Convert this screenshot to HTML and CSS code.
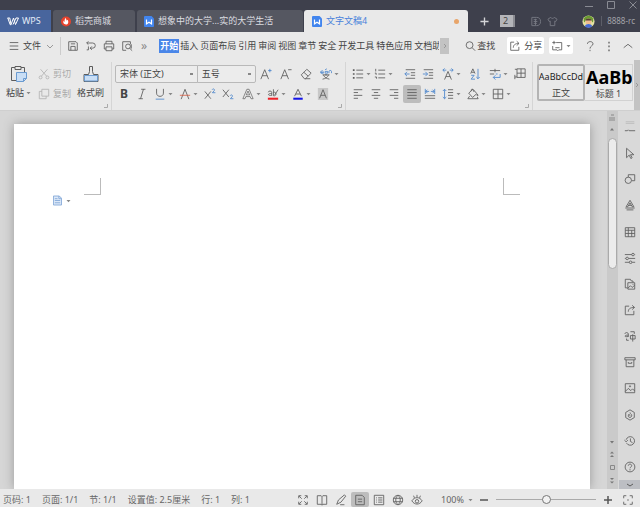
FILE: index.html
```html
<!DOCTYPE html>
<html lang="zh-CN">
<head>
<meta charset="utf-8">
<title>文字文稿4</title>
<link rel="stylesheet" href="styles.css">
</head>
<body>
<svg class="defs" aria-hidden="true">
  <symbol id="caret" viewBox="0 0 5 4"><path d="M.5 1h4L2.500 3.200z" fill="#888" stroke="none"/></symbol>
  <symbol id="doc" viewBox="0 0 10 11"><path d="M1 0h6.500L10 2.500V10a1 1 0 0 1-1 1H1a1 1 0 0 1-1-1V1a1 1 0 0 1 1-1z" fill="#4285ee" stroke="none"/><path d="M2.500 3.500v4.300L5 6.200l2.500 1.600V3.500" fill="none" stroke="#fff" stroke-width="1.200"/></symbol>
  <symbol id="corner" viewBox="0 0 4 4"><path d="M3.500 0v3.500H0" fill="none" stroke="#aaa"/></symbol>
</svg>
<div class="app">
  <header class="titlebar">
    <div class="window-controls">
      <button aria-label="最小化"><svg viewBox="0 0 8 8"><path d="M0 5.500h8"/></svg></button>
      <button aria-label="最大化"><svg viewBox="0 0 8 8"><path d="M.5.5h7v7h-7z"/></svg></button>
      <button aria-label="关闭"><svg viewBox="0 0 8 8"><path d="M.5.5l7 7M7.500.5l-7 7"/></svg></button>
    </div>
    <nav class="tabs">
      <button class="tab home"><svg class="wps" viewBox="0 0 12 9"><path d="M.5 1h2.300L4 7.500 6.500 1l2 6.500L11.500 1H9L6 7.500M.8 1l2.400 6.700h1"/></svg>WPS</button>
      <button class="tab shop"><svg class="tab-icon" viewBox="0 0 11 11"><circle cx="5.500" cy="5.500" r="5.500" fill="#e6432d" stroke="none"/><path d="M5.500 1.500c-.5 1.500.8 2 .7 3.300l1-1.300c1.700 2.500.6 5.300-1.700 5.300S1.700 6.600 3 4.500c.2 1 .6 1.400 1 1.500C3.700 4 4.200 2.500 5.500 1.500z" fill="#fff" stroke="none"/></svg>稻壳商城</button>
      <button class="tab file"><svg class="tab-icon"><use href="#doc"/></svg>想象中的大学...实的大学生活</button>
      <button class="tab active"><svg class="tab-icon"><use href="#doc"/></svg>文字文稿4<i class="unsaved"></i></button>
      <button class="plus" aria-label="新建"><svg viewBox="0 0 10 10"><path d="M5 .5v9M.5 5h9"/></svg></button>
      <span class="count">2</span>
      <button class="skin" aria-label="稻壳"><svg viewBox="0 0 12 12"><path d="M2 1.500h5a4 4 0 0 1 0 9H2zM4 4h3.500M4 6h4M4 8h3.500M6 3v7"/></svg></button>
      <button class="skin" aria-label="皮肤"><svg viewBox="0 0 12 12"><path d="M4 1.500L1 3.500 2.500 6l1-.5v5h5v-5l1 .5L11 3.500l-3-2c-.7 1.500-3.300 1.500-4 0z"/></svg></button>
      <button class="account"><svg viewBox="0 0 14 14"><circle cx="7" cy="7" r="6.500" fill="#e5e2a2"/><path d="M2 7C1 3 4 .8 7 .8S13 3 12 7l-1 1-1-3H4L3 8z" fill="#6a9b32"/><circle cx="7" cy="7" r="3.200" fill="#efbd91"/><path d="M3.500 6C4 3 10 3 10.500 6z" fill="#554136"/><path d="M3 12c1-3 7-3 8 0a6 6 0 0 1-8 0z" fill="#466bd5"/></svg><span>8888-rc</span></button>
    </nav>
  </header>

  <div class="menubar">
    <button class="file-menu"><svg class="ic" viewBox="0 0 14 14"><path d="M2 3h10M2 7h10M2 11h10"/></svg>文件<svg class="chev" viewBox="0 0 8 8"><path d="M1 3l3 3 3-3"/></svg></button>
    <div class="quick">
      <button aria-label="保存"><svg class="ic" viewBox="0 0 14 14"><path d="M2 3.500V2h8.500L12 3.500V12H2zM4.500 12V7.500h5V12M4.500 4.500h5"/></svg></button>
      <button aria-label="撤销"><svg class="ic" viewBox="0 0 14 14"><path d="M2 3.500h7a3 3 0 0 1 0 6H6M4 1.500l-2 2 2 2M4 7.500v4H2M8 7.500l-2 2 2 2"/></svg></button>
      <button aria-label="打印"><svg class="ic" viewBox="0 0 14 14"><path d="M3.500 4.500v-3h7v3M3.500 10.500h-2v-6h11v6h-2M3.500 8h7v4.500h-7z"/></svg></button>
      <button aria-label="打印预览"><svg class="ic" viewBox="0 0 14 14"><path d="M6 12H2V2h9v3M11 7.500a2.800 2.800 0 1 0-5.600 0 2.800 2.800 0 0 0 5.600 0zM10 9.500l3 3M12 5v5"/></svg></button>
      <button class="more" aria-label="更多">»</button>
    </div>
    <nav class="menus">
      <button class="on">开始</button><button>插入</button><button>页面布局</button><button>引用</button><button>审阅</button><button>视图</button><button>章节</button><button>安全</button><button>开发工具</button><button>特色应用</button><button class="cut">文档助</button>
    </nav>
    <button class="scroll-menu" aria-label="向右"><svg class="chev-right" viewBox="0 0 4 6"><path d="M1 1l2 2-2 2"/></svg></button>
    <button class="search"><svg class="ic" viewBox="0 0 14 14"><circle cx="6.500" cy="6" r="4"/><path d="M9.500 9l3.500 3.500"/></svg>查找</button>
    <button class="pill"><svg class="ic" viewBox="0 0 14 14"><path d="M6 2.500H2V12h9.500V8M5 9c0-3 2-5 6.500-5M9 1.500L11.700 4 9 6.500"/></svg>分享</button>
    <button class="pill narrow" aria-label="批注"><svg class="ic" viewBox="0 0 14 14"><path d="M6 3h6.500v8.500H9l-1 1-1-1H2V7M1.500 3h4M3.500 1v4M5 9h5"/></svg><svg class="caret"><use href="#caret"/></svg></button>
    <div class="help">
      <button aria-label="帮助"><svg class="ic" viewBox="0 0 14 14"><path d="M4 4.500C4 1 10.500 1 10.500 4.500 10.500 7 7 6.800 7 10M7 11.500V13"/></svg></button>
      <button aria-label="选项"><svg class="ic" viewBox="0 0 14 14"><path d="M7 2v2M7 6.500v2M7 11v2" stroke-width="1.500"/></svg></button>
      <button aria-label="收起"><svg class="ic" viewBox="0 0 14 14"><path d="M2 9l5-4 5 4"/></svg></button>
    </div>
  </div>

  <div class="ribbon">
    <section class="group clipboard">
      <button class="big"><svg viewBox="0 0 18 18"><path d="M5 2.500H1.500v13H6M11 2.500h3.500V7M5 1.500h6v3H5z"/><path d="M6.500 7.500h10v6l-3 3h-7z" fill="#c9def5" stroke="#6b9bd0"/><path d="M16.500 13.500h-3v3" stroke="#6b9bd0"/></svg><span>粘贴<svg class="caret"><use href="#caret"/></svg></span></button>
      <div class="stack">
        <button><svg class="ic" viewBox="0 0 14 14"><path d="M3 1.500l7 8M11 1.500l-7 8"/><circle cx="3" cy="11" r="1.700"/><circle cx="11" cy="11" r="1.700"/></svg>剪切</button>
        <button><svg class="ic" viewBox="0 0 14 14"><path d="M4.500 1.500h8v8h-8zM4.500 4h-3v8.500h8v-3"/></svg>复制</button>
      </div>
      <button class="big painter"><svg viewBox="0 0 18 18"><path d="M2 16.500v-7h4.500l1-3v-5h3v5l1 3H16v7z"/><path d="M2.500 10.500h13v5.500h-13z" fill="#c9def5" stroke="#6b9bd0"/></svg><span>格式刷</span></button>
      <svg class="launcher"><use href="#corner"/></svg>
    </section>

    <section class="group font">
      <div class="row">
        <select class="family" aria-label="字体"><option>宋体 (正文)</option></select>
        <select class="size" aria-label="字号"><option>五号</option></select>
        <button class="t w20" aria-label="增大字号"><svg class="ic" viewBox="0 0 14 14"><path d="M1 13L5.500 2 10 13M2.500 9h6"/><path d="M9.500 3h4M11.500 1v4" stroke="#4d86cc"/></svg></button>
        <button class="t w20" aria-label="减小字号"><svg class="ic" viewBox="0 0 14 14"><path d="M1 13L5.500 2 10 13M2.500 9h6M9.500 2h4"/></svg></button>
        <button class="t w20" aria-label="清除格式"><svg class="ic" viewBox="0 0 14 14"><path d="M1.500 8l6.500-6.500 5 4.500-6.500 6.500H5zM4.500 5l5 4.500M6 12.500h6"/></svg></button>
        <button class="t w25" aria-label="拼音"><svg class="ic" viewBox="0 0 14 14"><path d="M1 5.500c0-3 3-3 3 0H1V4M6 4h3v2H6zM10.500 6V4c0-1.500 3-1.500 3 0v2M1 6h3M6 2l2-1" stroke="#4d86cc"/><path d="M3 8h8M7 7v2M4 8c1 3 4 4.500 7 5M10 8c-1 3-4 4.500-7 5"/></svg><svg class="caret"><use href="#caret"/></svg></button>
      </div>
      <div class="row">
        <button class="t w18 bold">B</button>
        <button class="t w18" aria-label="倾斜"><svg class="ic" viewBox="0 0 14 14"><path d="M6 1.500h5M3 12.500h5M8.700 1.500l-3.400 11"/></svg></button>
        <button class="t w25" aria-label="下划线"><svg class="ic" viewBox="0 0 14 14"><path d="M3 1v5c0 5 8 5 8 0V1"/><path d="M2 13h10" stroke="#4d86cc"/></svg><svg class="caret"><use href="#caret"/></svg></button>
        <button class="t w25" aria-label="删除线"><svg class="ic" viewBox="0 0 14 14"><path d="M2.500 13L7 1.500 11.500 13"/><path d="M1 8.500h12" stroke="#d7634a"/></svg><svg class="caret"><use href="#caret"/></svg></button>
        <button class="t w18" aria-label="上标"><svg class="ic" viewBox="0 0 14 14"><path d="M1 4l7 8.500M8 4l-7 8.500"/><path d="M9.500 2c1-2 3.500-.5 2.500 1L9.800 5.500h3.500" stroke="#4d86cc"/></svg></button>
        <button class="t w20" aria-label="下标"><svg class="ic" viewBox="0 0 14 14"><path d="M1 2l7 8.500M8 2l-7 8.500"/><path d="M9.500 9c1-2 3.500-.5 2.500 1l-2.200 2.500h3.500" stroke="#4d86cc"/></svg></button>
        <button class="t w25" aria-label="文字效果"><svg class="ic" viewBox="0 0 14 14"><path d="M1 12.500L5.700 1.500h2.600L13 12.500h-2.500l-1-2.500h-5l-1 2.500zM5 8h4L7 3.500z" stroke-width=".8"/></svg><svg class="caret"><use href="#caret"/></svg></button>
        <button class="t w25" aria-label="突出显示"><svg class="ic" viewBox="0 0 14 14"><path d="M1.500 5c0-2 4-2 4 0v4M5.500 6.500c-5-.5-5 3 0 2M7.500 1.500V9c4 1 4-5 0-4M13 2l-4 6"/><path d="M1 12.500h12" stroke="#ee2028" stroke-width="2.400"/></svg><svg class="caret"><use href="#caret"/></svg></button>
        <button class="t w25" aria-label="字体颜色"><svg class="ic" viewBox="0 0 14 14"><path d="M3 9.500l4-8 4 8M4.500 7h5"/><path d="M1.500 12.500h11" stroke="#1414e8" stroke-width="2.400"/></svg><svg class="caret"><use href="#caret"/></svg></button>
        <button class="t w18" aria-label="字符底纹"><svg class="ic" viewBox="0 0 14 14"><path d="M1 0h12v14H1z" fill="#c8c8c8" stroke="none"/><path d="M3 12L7 2l4 10M4.500 8.500h5"/></svg></button>
      </div>
      <svg class="launcher"><use href="#corner"/></svg>
    </section>

    <section class="group para">
      <div class="row">
        <button class="t w22" aria-label="项目符号"><svg class="ic" viewBox="0 0 14 14"><path d="M5 2.500h8M5 7h8M5 11.500h8"/><path d="M1 2.500h2M1 7h2M1 11.500h2" stroke-width="2"/></svg><svg class="caret"><use href="#caret"/></svg></button>
        <button class="t w30" aria-label="编号"><svg class="ic" viewBox="0 0 14 14"><path d="M5 2.500h8M5 7h8M5 11.500h8M2 1v3M1 6h1.500v2M1 10.500h2v2"/></svg><svg class="caret"><use href="#caret"/></svg></button>
        <button class="t w18" aria-label="减少缩进"><svg class="ic" viewBox="0 0 14 14"><path d="M2 2h11M8 5.500h5M8 8.500h5M2 12h11"/><path d="M1 7h5.500M3.500 4.500L1 7l2.500 2.500" stroke="#4d86cc"/></svg></button>
        <button class="t w20" aria-label="增加缩进"><svg class="ic" viewBox="0 0 14 14"><path d="M2 2h11M8 5.500h5M8 8.500h5M2 12h11"/><path d="M1 7h5.500M4 4.500L6.500 7 4 9.500" stroke="#4d86cc"/></svg></button>
        <button class="t w27" aria-label="字符缩放"><svg class="ic" viewBox="0 0 14 14"><path d="M3 13.500L7 4l4 9.500M4.500 10h5"/><path d="M5 2.500H1M3 .5l-2 2 2 2M9 2.500h4M11 .5l2 2-2 2" stroke="#4d86cc"/></svg><svg class="caret"><use href="#caret"/></svg></button>
        <button class="t w20" aria-label="排序"><svg class="ic" viewBox="0 0 14 14"><path d="M2 6.500l2.500-5.500L7 6.500M3 5h3"/><path d="M2.500 8.500H6L2.500 13H7M10.500 1v11.500M8.500 10.500l2 2 2-2" stroke="#4d86cc"/></svg></button>
        <button class="t w25" aria-label="换行"><svg class="ic" viewBox="0 0 14 14"><path d="M1 3h12M7 1v4M1 7h5"/><path d="M13 7v4H5M7.500 8.500L5 11l2.500 2.500M8 7h2" stroke="#4d86cc"/></svg><svg class="caret"><use href="#caret"/></svg></button>
        <button class="t w18" aria-label="制表位"><svg class="ic" viewBox="0 0 14 14"><path d="M3.500 1h9.500v10H3.500zM8.200 1v10M3.500 6H13M1 8v5M1 10.500h2.500M1 1.500h2.500"/></svg></button>
      </div>
      <div class="row">
        <button class="t w18" aria-label="左对齐"><svg class="ic" viewBox="0 0 14 14"><path d="M2 2h10M2 5.300h5M2 8.600h10M2 12h5"/></svg></button>
        <button class="t w18" aria-label="居中"><svg class="ic" viewBox="0 0 14 14"><path d="M2 2h10M4.500 5.300h5M2 8.600h10M4.500 12h5"/></svg></button>
        <button class="t w18" aria-label="右对齐"><svg class="ic" viewBox="0 0 14 14"><path d="M2 2h10M7 5.300h5M2 8.600h10M7 12h5"/></svg></button>
        <button class="t w18 pressed" aria-label="两端对齐"><svg class="ic" viewBox="0 0 14 14"><path d="M1.500 2h11M1.500 5.300h11M1.500 8.600h11M1.500 12h11"/></svg></button>
        <button class="t w18" aria-label="分散对齐"><svg class="ic" viewBox="0 0 14 14"><path d="M1 9h12M1 12h12"/><path d="M1.500 1v6M12.500 1v6M2 4h4M8 4h4M4 2L2 4l2 2M10 2l2 2-2 2" stroke="#4d86cc"/></svg></button>
        <button class="t w25" aria-label="行距"><svg class="ic" viewBox="0 0 14 14"><path d="M7 2h6M7 5.300h6M7 8.600h6M7 12h6"/><path d="M3 1.500v11M1 3.500l2-2 2 2M1 10.500l2 2 2-2" stroke="#4d86cc"/></svg><svg class="caret"><use href="#caret"/></svg></button>
        <button class="t w25" aria-label="底纹颜色"><svg class="ic" viewBox="0 0 14 14"><path d="M2 6l5-4.500 4.500 5L6.500 11zM5 3.500c-1-3 3-3 3 1M12 7c2 3-1 3 0 0M3 9.500l-2 3h12l-1-2"/></svg><svg class="caret"><use href="#caret"/></svg></button>
        <button class="t w25" aria-label="边框"><svg class="ic" viewBox="0 0 14 14"><path d="M1.500 1.500h11v11h-11zM7 1.500v11M1.500 7h11"/></svg><svg class="caret"><use href="#caret"/></svg></button>
      </div>
      <svg class="launcher"><use href="#corner"/></svg>
    </section>

    <section class="group styles">
      <button class="style chosen"><span class="sample">AaBbCcDd</span><span>正文</span></button>
      <button class="style"><span class="sample heading">AaBb</span><span>标题 1</span></button>
    </section>
    <button class="ribbon-next" aria-label="更多功能"><svg class="chev-right" viewBox="0 0 4 6"><path d="M1 1l2 2-2 2"/></svg></button>
  </div>

  <main class="workspace">
    <div class="canvas">
      <article class="paper">
        <div class="margins"><i class="mark left"></i><i class="mark right"></i></div>
        <button class="paste-tag" aria-label="文档选项"><svg viewBox="0 0 10 11"><path d="M.5.5H7L9.500 3v7.500h-9z" fill="#dce8f8" stroke="#84a9d8"/><path d="M2 3.500h3M2 5.500h6M2 8h6M6.500.5v3h3" stroke="#84a9d8" fill="none"/></svg><svg class="caret"><use href="#caret"/></svg></button>
      </article>
    </div>
    <div class="scrollbar">
      <svg class="up" viewBox="0 0 8 20"><path d="M3 4h3M1 7h6M1 9h6"/><path d="M2 19.500h4L4 17z" fill="#777" stroke="none"/></svg>
      <div class="thumb"></div>
      <svg class="down" viewBox="0 0 8 50"><path d="M2 2h4L4 4.500zM2 14.500l2-2 2 2zM2 18l2-2 2 2z" fill="#777" stroke="none"/><path d="M2.500 26.500h4v4h-4z"/><path d="M2 39h4l-2 2zM2 42.500h4l-2 2z" fill="#777" stroke="none"/></svg>
    </div>
    <aside class="sidebar">
      <svg class="grip" viewBox="0 0 14 14"><path d="M2 2h10M2 4h10" stroke="#bbb"/><path d="M1 12.500h3l1-1 1 1h7"/></svg>
      <button aria-label="选择"><svg class="ic" viewBox="0 0 14 14"><path d="M3 1.500v11l3-3 2 4 1.500-1-2-3.500h4z"/></svg></button>
      <button aria-label="形状"><svg class="ic" viewBox="0 0 14 14"><path d="M5 5V2h7.500v7H9"/><circle cx="5" cy="8.500" r="3.700"/></svg></button>
      <button aria-label="艺术字"><svg class="ic" viewBox="0 0 14 14"><path d="M2.500 9L7 1.500 11.500 9H9.500L7 4.500 4.500 9zM5.500 7.500h3M1.500 10.500h11M3 12.700h8"/></svg></button>
      <button aria-label="表格"><svg class="ic" viewBox="0 0 14 14"><path d="M1.500 2h11v10.500h-11zM1.500 5h11M1.500 8.700h11M5 2v10.500M9 5v7.500"/></svg></button>
      <button aria-label="属性"><svg class="ic" viewBox="0 0 14 14"><path d="M1 3h8M12.500 3h.5M1 7.500h1M5.500 7.500H13M1 12h5M9.500 12H13"/><circle cx="10.500" cy="3" r="1.500"/><circle cx="3.700" cy="7.500" r="1.500"/><circle cx="7.700" cy="12" r="1.500"/></svg></button>
      <button aria-label="图库"><svg class="ic" viewBox="0 0 14 14"><path d="M4 11.500H1.500v-10h6l1 2h2V5M4.500 5.500h8v7.500h-8zM4.500 12l3-3 2 2 3-2.500M10 7.500h1"/></svg></button>
      <button aria-label="分享"><svg class="ic" viewBox="0 0 14 14"><path d="M6 2.500H1.500V12.500h10V8M5 9c0-3 2-5 7-5M9.500 1.500L12.300 4 9.500 6.500"/></svg></button>
      <button aria-label="翻译"><svg class="ic" viewBox="0 0 14 14"><path d="M1 4.500c0-2 4-2 4 0V8M5 6C0 5.500 0 9 5 7.500M7.500 6.500H13v4H7.500zM10.200 5v8.500M7.500 2H12v2.500M3 10v2h2.500"/></svg></button>
      <button aria-label="归档"><svg class="ic" viewBox="0 0 14 14"><path d="M1 2h12v2.500H1zM2.500 4.500v8h9v-8M5 7v1.500h4V7"/></svg></button>
      <button aria-label="图片"><svg class="ic" viewBox="0 0 14 14"><path d="M1.500 2h11v10.500h-11zM1.500 11l3.500-3.500L8 10l2-2 2.500 2.500"/><circle cx="7" cy="5" r=".7"/></svg></button>
      <button aria-label="稻壳"><svg class="ic" viewBox="0 0 14 14"><path d="M7 1l5 3v6l-5 3-5-3V4zM7 4c0 2 2.500 2 2 4-.5 2.500-4 2.500-4 0 0-1 .5-1.500 1-2 0 1.500 1 1 1 2.500"/></svg></button>
      <button aria-label="历史"><svg class="ic" viewBox="0 0 14 14"><path d="M3 9.500a5 5 0 1 0-.5-4M.5 6l2 2 2-2M7.500 4v3.500l2.500 1.500"/></svg></button>
      <button aria-label="帮助"><svg class="ic" viewBox="0 0 14 14"><circle cx="7" cy="7" r="5.700"/><path d="M5 5.500c0-2.500 4-2.500 4 0C9 7 7 7 7 8.500M7 9.500V11"/></svg></button>
      <button class="side-more" aria-label="更多"><svg viewBox="0 0 8 8"><path d="M1 3l3 2 3-2"/></svg></button>
    </aside>
  </main>

  <footer class="status">
    <div class="facts"><span>页码: 1</span><span>页面: 1/1</span><span>节: 1/1</span><span>设置值: 2.5厘米</span><span>行: 1</span><span>列: 1</span></div>
    <div class="views">
      <button aria-label="全屏"><svg class="ic" viewBox="0 0 14 14"><path d="M2 5V2h3M9 2h3v3M12 9v3H9M5 12H2V9M2.500 2.500l3 3M11.500 2.500l-3 3M2.500 11.500l3-3M11.500 11.500l-3-3"/></svg></button>
      <button aria-label="阅读"><svg class="ic" viewBox="0 0 14 14"><path d="M1.500 2H6l1 1 1-1h4.500v10H8l-1 1-1-1H1.500zM7 3v10"/></svg></button>
      <button aria-label="写作"><svg class="ic" viewBox="0 0 14 14"><path d="M2 12l2-5 7-6 1.500 1.500L7 9.500zM6 12.500h5"/></svg></button>
      <button class="pressed" aria-label="页面视图"><svg class="ic" viewBox="0 0 14 14"><path d="M2 1.500h7.500L12 4v8.500H2zM4.500 6h5M4.500 9h5"/></svg></button>
      <button aria-label="大纲"><svg class="ic" viewBox="0 0 14 14"><path d="M1.500 1.500h11v11h-11zM3.500 4.500h1M6 4.500h5M3.500 7h1M6 7h5M3.500 9.500h1M6 9.500h5"/></svg></button>
      <button aria-label="网页"><svg class="ic" viewBox="0 0 14 14"><circle cx="7" cy="7" r="5.500"/><path d="M1.500 5h11M1.500 9h11M7 1.500c-3.500 3-3.500 8 0 11M7 1.500c3.500 3 3.500 8 0 11"/></svg></button>
      <button aria-label="护眼"><svg class="ic" viewBox="0 0 14 14"><path d="M1 8c3-5 9-5 12 0-3 5-9 5-12 0zM7 1v2.500M3 2l1 2.500M11 2l-1 2.500"/><circle cx="7" cy="8.500" r="2"/></svg></button>
    </div>
    <button class="zoom-value">100%<svg class="caret"><use href="#caret"/></svg></button>
    <button class="step" aria-label="缩小"><svg viewBox="0 0 8 8"><path d="M0 4h8"/></svg></button>
    <input class="zoom" type="range" min="0" max="200" value="100" aria-label="缩放">
    <button class="step" aria-label="放大"><svg viewBox="0 0 8 8"><path d="M0 4h8M4 0v8"/></svg></button>
    <button class="fit" aria-label="适应窗口"><svg class="ic" viewBox="0 0 14 14"><path d="M2 5V2h3M9 2h3v3M12 9v3H9M5 12H2V9M6 7h2"/></svg></button>
  </footer>
</div>
</body>
</html>
```
FILE: styles.css
```css
* { box-sizing: border-box; }
body {
  margin: 0;
  font: 9px/12px "Noto Sans", "Noto Sans CJK SC", sans-serif;
  color: #444;
  background: #e9e9e9;
}
button, select, input { font: inherit; color: inherit; margin: 0; }
button {
  display: flex;
  align-items: center;
  flex: none;
  padding: 0;
  border: 0;
  background: none;
  white-space: nowrap;
}
svg { display: block; flex: none; fill: none; stroke: #5c5c5c; }
.defs { position: absolute; width: 0; height: 0; }
.ic { width: 12px; height: 12px; }
.caret { width: 5px; height: 4px; }
.chev-right { width: 4px; height: 6px; stroke: #999; }
.app { display: flex; flex-direction: column; min-height: 100vh; }

/* title bar */
.titlebar { background: #3e404c; overflow: hidden; }
.window-controls { display: flex; justify-content: flex-end; gap: 14px; height: 10px; padding-right: 3px; }
.window-controls svg { width: 8px; height: 8px; stroke: #898b93; }
.tabs { display: flex; align-items: stretch; height: 22px; }
.tab { gap: 4px; margin-right: 2px; padding: 0 7px; color: #dcdde0; background: #555761; border-radius: 3px 3px 0 0; }
.tab-icon { width: 10px; height: 11px; }
.home { gap: 3px; width: 51px; color: #e3ebf7; background: #48659d; border-radius: 0; }
.wps { width: 12px; height: 9px; stroke: #fff; }
.shop { width: 82px; padding-left: 8px; }
.file { width: 166px; margin-right: 1px; }
.active { flex: 0 1 164px; min-width: 0; padding: 0 9px 0 8px; color: #4a82db; background: #e9e9e9; }
.unsaved { width: 5px; height: 5px; margin-left: auto; border-radius: 50%; background: #e8a56a; }
.plus { margin: 0 11px 0 10px; }
.plus svg { width: 9px; height: 9px; stroke: #d4d5d8; stroke-width: 1.5; }
.count { align-self: center; width: 15px; padding-left: 3px; color: #444; background: #b4b5b9; border-right: 2px solid #8b8c92; }
.skin { margin-left: 6px; }
.count + .skin { margin-left: 15px; }
.skin svg { width: 11px; height: 11px; stroke: #777983; }
.account { gap: 6px; margin-left: auto; color: #a3a4aa; font-size: 8px; }
.account svg { width: 13px; height: 13px; stroke: none; }
.account span { padding: 0 5px; border-left: 1px solid #5c5e68; line-height: 10px; }

/* menu bar */
.menubar { display: flex; align-items: center; height: 27px; padding: 0 6px 0 8px; background: #e9e9e9; }
.file-menu { gap: 3px; padding-right: 6px; border-right: 1px solid #ccc; height: 18px; }
.chev { width: 8px; height: 8px; margin-left: 2px; stroke: #999; }
.quick { display: flex; gap: 6px; margin-left: 6px; }
.more { margin-left: 2px; color: #888; font-size: 12px; }
.menus { display: flex; gap: 2px; flex: 0 1 auto; min-width: 0; margin-left: 12px; overflow: hidden; }
.menus .on { padding: 0 1px; margin-right: -1px; color: #fff; background: #4a86e8; font-weight: 700; }
.menus button { height: 14px; }
.cut { flex: 0 0 25px; overflow: hidden; }
.scroll-menu { width: 9px; height: 16px; margin-left: 1px; justify-content: center; background: #c3c3c3; }
.search { gap: 1px; margin: 0 12px 0 15px; }
.pill { gap: 3px; height: 17px; padding: 0 2px; background: #fff; border-radius: 2px; }
.pill + .pill { margin-left: 5px; }
.narrow { padding: 0 2px; }
.help { display: flex; gap: 7px; margin-left: auto; }

/* ribbon */
.ribbon { display: flex; height: 52px; border-bottom: 1px solid #cfcfcf; background: #e9e9e9; }
.group { position: relative; flex: none; margin: 3px 0 0; padding: 2px 3px 0; border-right: 1px solid #d5d5d5; }
.launcher { position: absolute; right: 3px; bottom: 2px; width: 4px; height: 4px; }
.clipboard { display: flex; align-items: flex-start; width: 112px; padding-left: 6px; }
.big { flex-direction: column; gap: 4px; padding-top: 1px; }
.big > svg { width: 18px; height: 18px; }
.big span { display: flex; align-items: center; gap: 2px; }
.stack { display: flex; flex-direction: column; margin: 0 6px 0 7px; color: #aaa; }
.stack button { gap: 3px; height: 20px; }
.stack svg { stroke: #b3b3b3; }
.row { display: flex; align-items: center; height: 20px; }
.row + .row { height: 19px; }
.font { width: 234px; }
.para { width: 187px; }
.t { height: 18px; padding-left: 3px; }
.t .caret { margin-left: 2px; }
.w18 { width: 18px; }
.w20 { width: 20px; }
.w22 { width: 22px; }
.w25 { width: 25px; }
.w27 { width: 27px; }
.w30 { width: 30px; }
.pressed { background: #bdbdbd; border-radius: 2px; }
.bold { padding-left: 5px; font-size: 12px; font-weight: 700; }
select {
  appearance: none;
  height: 18px;
  padding: 0 4px;
  border: 1px solid #b9b9b9;
  background: linear-gradient(#888, #888) right 4px center / 3px 2px no-repeat #ececec;
}
.family { width: 84px; border-radius: 2px 0 0 2px; }
.size { width: 60px; margin: 0 1px 0 -1px; border-radius: 0 2px 2px 0; }
.styles { display: flex; flex: 1 1 0; min-width: 0; padding: 2px 0 0 4px; border-right: 0; overflow: hidden; }
.style { flex-direction: column; width: 48px; height: 37px; border: 1px solid #d2d2d2; border-left: 0; overflow: hidden; }
.chosen { border: 2px solid #b4b4b4; border-radius: 2px; }
.sample { display: flex; align-items: center; height: 21px; color: #222; }
.style:not(.chosen) .sample { height: 23px; }
.heading { align-self: flex-start; padding-left: 1px; font-size: 18px; font-weight: 700; color: #000; }
.ribbon-next { width: 6px; margin-top: 1px; justify-content: center; background: #c3c3c3; }

/* document area */
.workspace { display: flex; flex: 1; background: #d6d6d6; }
.canvas { display: flex; flex: 1; padding: 13px 17px 0 14px; overflow: hidden; }
.paper { flex: 1; background: #fff; box-shadow: 0 0 10px #999; }
.margins { display: flex; justify-content: space-between; padding: 54px 70px 0; }
.mark { width: 17px; height: 17px; border: 0 solid #bbb; border-bottom-width: 1px; }
.left { border-right-width: 1px; }
.right { border-left-width: 1px; }
.paste-tag { gap: 4px; margin-left: 39px; }
.paste-tag svg:first-child { width: 9px; height: 11px; }
.scrollbar { display: flex; flex-direction: column; width: 11px; padding: 0 1px; background: #cacaca; }
.scrollbar svg { stroke: #888; width: 8px; }
.up { height: 20px; }
.thumb { width: 9px; height: 131px; margin-top: 7px; border: 1px solid #aaa; border-radius: 5px; background: #ececec; }
.down { height: 50px; margin-top: auto; }
.sidebar { display: flex; flex-direction: column; align-items: center; width: 22px; padding-left: 1px; background: #d9d9d9; }
.sidebar button { flex: 1 0 20px; }
.grip { width: 12px; height: 12px; margin: 9px 0 8px; }
.sidebar .side-more { flex: 0 0 9px; width: 22px; justify-content: center; background: #bcbec3; }
.side-more svg { width: 8px; height: 8px; }

/* status bar */
.status { display: flex; align-items: center; height: 18px; padding: 3px 6px 0 3px; color: #666; background: #e9e9e9; }
.facts { display: flex; gap: 11px; }
.views { display: flex; gap: 1px; margin-left: auto; }
.views button { justify-content: center; width: 18px; height: 15px; }
.zoom-value { gap: 4px; margin: 0 7px 0 15px; }
.step svg { width: 8px; height: 8px; stroke: #555; stroke-width: 1.5; }
.zoom { appearance: none; width: 100px; height: 10px; margin: 0 8px; background: linear-gradient(#aaa, #aaa) center / 100% 1px no-repeat; }
.zoom::-webkit-slider-thumb { appearance: none; width: 9px; height: 9px; border: 1px solid #777; border-radius: 50%; background: #f2f2f2; }
.fit { margin-left: 10px; }
```
